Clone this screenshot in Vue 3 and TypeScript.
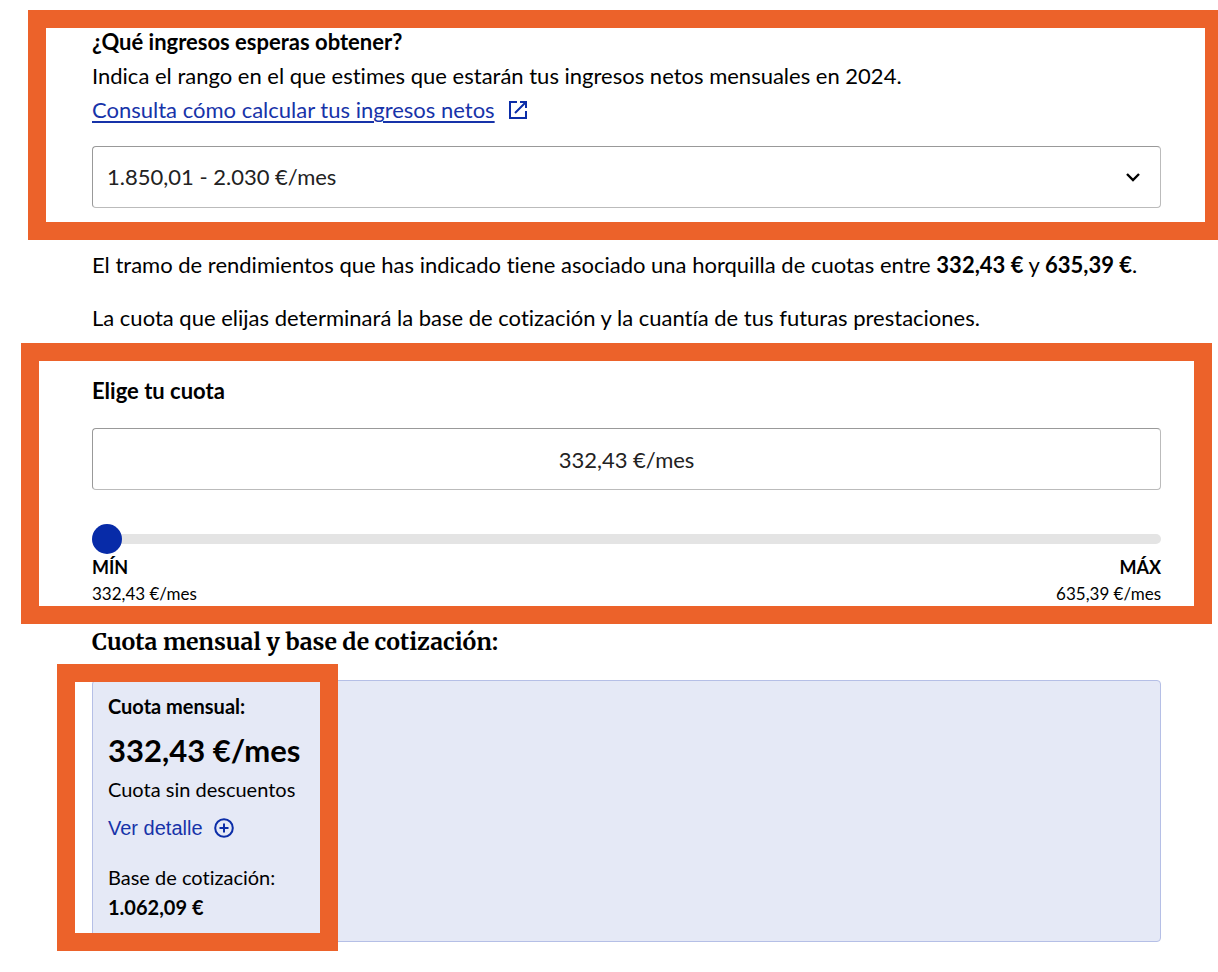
<script setup lang="ts">
import { computed, ref } from 'vue'

const MIN_FEE = 332.43
const MAX_FEE = 635.39
const MIN_BASE = 1062.09

const ranges: string[] = [
  '1.700,01 - 1.850 €/mes',
  '1.850,01 - 2.030 €/mes',
  '2.030,01 - 2.330 €/mes',
]

const range = ref(ranges[1])
const fee = ref(MIN_FEE)

function format(value: number): string {
  const [whole, decimals] = value.toFixed(2).split('.')
  return `${whole.replace(/\B(?=(\d{3})+$)/g, '.')},${decimals}`
}

const feeText = computed(() => `${format(fee.value)} €/mes`)
const baseText = computed(() => `${format((fee.value * MIN_BASE) / MIN_FEE)} €`)
</script>

<template>
  <main class="page">
    <section class="block income">
      <label class="title" for="range">¿Qué ingresos esperas obtener?</label>
      <p>Indica el rango en el que estimes que estarán tus ingresos netos mensuales en 2024.</p>
      <p class="link-row">
        <a href="#ingresos-netos">Consulta cómo calcular tus ingresos netos</a>
        <svg class="external" viewBox="0 0 18 18" aria-hidden="true">
          <path d="M8 1H1V17H17V10M11 1H17V7M17 1L6 12" />
        </svg>
      </p>
      <div class="select-wrap">
        <select id="range" v-model="range" class="field">
          <option v-for="item in ranges" :key="item" :value="item">{{ item }}</option>
        </select>
        <svg class="chevron" viewBox="0 0 16 10" aria-hidden="true">
          <path d="M2 2L8 8L14 2" />
        </svg>
      </div>
      <span class="frame" aria-hidden="true"></span>
    </section>

    <div class="notes">
      <p>
        El tramo de rendimientos que has indicado tiene asociado una horquilla de cuotas entre
        <strong>{{ format(MIN_FEE) }} €</strong> y <strong>{{ format(MAX_FEE) }} €</strong>.
      </p>
      <p>La cuota que elijas determinará la base de cotización y la cuantía de tus futuras prestaciones.</p>
    </div>

    <section class="block fee">
      <label class="title" for="fee">Elige tu cuota</label>
      <input id="fee" class="field amount" type="text" :value="feeText" readonly />
      <input
        v-model.number="fee"
        class="slider"
        type="range"
        aria-label="Cuota mensual"
        :min="MIN_FEE"
        :max="MAX_FEE"
        step="0.01"
      />
      <div class="limits">
        <p><strong>MÍN</strong><br /><span>{{ format(MIN_FEE) }} €/mes</span></p>
        <p><strong>MÁX</strong><br /><span>{{ format(MAX_FEE) }} €/mes</span></p>
      </div>
      <span class="frame" aria-hidden="true"></span>
    </section>

    <h2>Cuota mensual y base de cotización:</h2>

    <section class="panel">
      <p><strong>Cuota mensual:</strong></p>
      <p class="total">{{ feeText }}</p>
      <p>Cuota sin descuentos</p>
      <button type="button" class="detail">
        Ver detalle
        <svg viewBox="0 0 20 20" aria-hidden="true">
          <circle cx="10" cy="10" r="8.8" />
          <path d="M10 5.5V14.5M5.5 10H14.5" />
        </svg>
      </button>
      <p>Base de cotización:</p>
      <p><strong>{{ baseText }}</strong></p>
      <span class="frame" aria-hidden="true"></span>
    </section>
  </main>
</template>

<style>
body {
  margin: 0;
  background: #fff;
}
</style>

<style scoped>
.page {
  box-sizing: border-box;
  padding: 25px 57px 30px 92px;
  overflow-x: hidden;
  font-family: Lato, 'Liberation Sans', sans-serif;
  font-size: 22px;
  font-variant-ligatures: none;
  line-height: 34px;
  color: #000;
}

p {
  margin: 0;
}

.block,
.panel {
  position: relative;
}

.title {
  display: block;
  font-weight: 700;
}

.frame {
  position: absolute;
  border: 18px solid #ec622a;
  pointer-events: none;
}

.income .frame {
  inset: -15px -62px -32px -64px;
}

.link-row {
  display: flex;
  align-items: center;
  gap: 14px;
}

.link-row a {
  color: #1733a9;
  text-decoration-thickness: 2px;
  text-underline-offset: 3px;
}

.external {
  width: 18px;
  height: 18px;
  fill: none;
  stroke: #0b2da8;
  stroke-width: 2;
}

.field {
  display: block;
  box-sizing: border-box;
  width: 100%;
  height: 62px;
  margin: 0;
  padding: 0 14px;
  border: 1px solid;
  border-color: #999 #bbb #bbb #999;
  border-radius: 4px;
  background: #fff;
  font: inherit;
  color: #222;
  appearance: none;
}

.select-wrap {
  display: grid;
  align-items: center;
  margin-top: 19px;
}

.select-wrap > * {
  grid-area: 1 / 1;
}

.chevron {
  justify-self: end;
  width: 16px;
  height: 10px;
  margin-right: 20px;
  fill: none;
  stroke: #000;
  stroke-width: 2.4;
  pointer-events: none;
}

.notes {
  display: grid;
  gap: 19px;
  margin: 40px 0 39px;
}

.fee .frame {
  inset: -31px -51px -17px -71px;
}

.amount {
  margin-top: 20px;
  text-align: center;
}

.slider {
  display: block;
  width: 100%;
  height: 30px;
  margin: 34px 0 0;
  background: transparent;
  appearance: none;
}

.slider::-webkit-slider-runnable-track {
  height: 10px;
  border-radius: 5px;
  background: #e4e4e4;
}

.slider::-webkit-slider-thumb {
  width: 30px;
  height: 30px;
  margin-top: -10px;
  border: 0;
  border-radius: 50%;
  background: #072ba8;
  appearance: none;
}

.limits {
  display: flex;
  justify-content: space-between;
  font-size: 18px;
  line-height: 26px;
}

.limits span {
  font-size: 17px;
}

.limits p:last-child {
  text-align: right;
}

h2 {
  margin: 18px 0 21px;
  font-family: Merriweather, 'DejaVu Serif Condensed', 'DejaVu Serif', serif;
  font-size: 23px;
  font-weight: 700;
  line-height: 34px;
}

.panel {
  padding: 10px 15px 19px;
  border: 1px solid #b5bfe6;
  border-radius: 4px;
  background: #e5e9f6;
  font-size: 20px;
  line-height: 30px;
}

.panel .frame {
  top: -17px;
  bottom: -10px;
  left: -36px;
  width: 245px;
}

.total {
  margin: 7px 0 2px;
  font-size: 31px;
  font-weight: 700;
  line-height: 44px;
}

.detail {
  display: flex;
  align-items: center;
  gap: 11px;
  margin: 9px 0 19px;
  padding: 0;
  border: 0;
  background: none;
  font: 20px/30px 'Liberation Sans', sans-serif;
  color: #1733a9;
}

.detail svg {
  width: 20px;
  height: 20px;
  fill: none;
  stroke: #0b2da8;
  stroke-width: 2;
}
</style>
